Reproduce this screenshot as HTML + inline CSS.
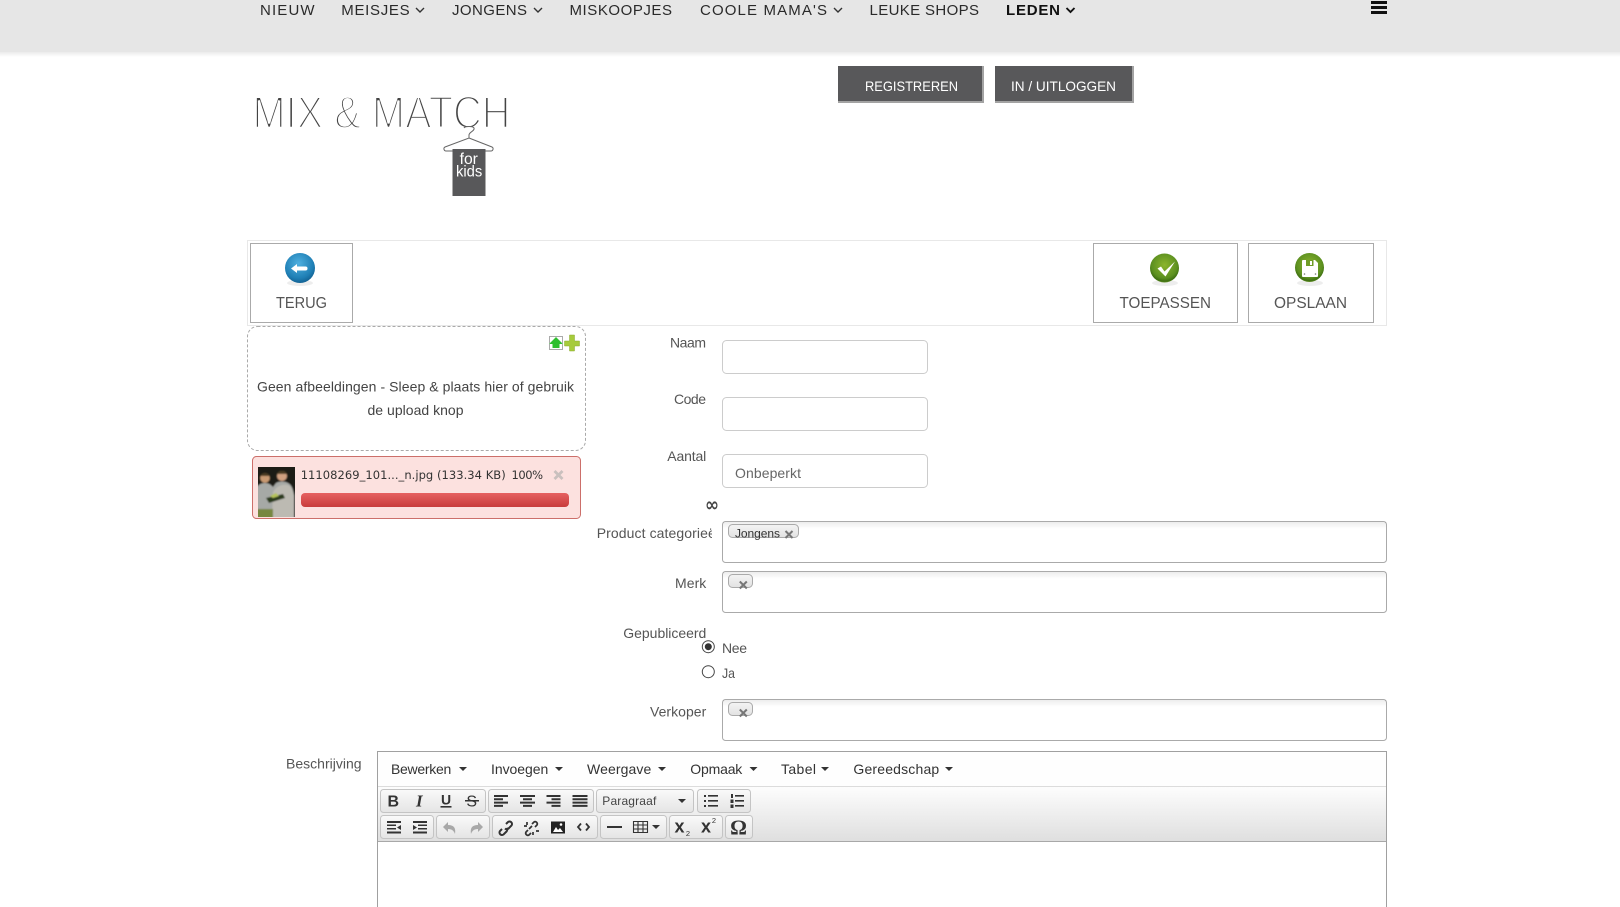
<!DOCTYPE html>
<html lang="nl"><head><meta charset="utf-8"><title>Mix &amp; Match for kids</title>
<style>
html,body{margin:0;padding:0;background:#fff;width:1620px;height:907px;overflow:hidden}
svg{display:block;font-family:"Liberation Sans",sans-serif}
.nav{font-size:15px;fill:#2a2a2a}
.chev{fill:none;stroke:#333;stroke-width:1.4}
.lbl{font-size:14px;fill:#555}
.big{font-size:16px;fill:#555}
.box{fill:#fff;stroke:#aaa;stroke-width:1}
.inp{fill:#fff;stroke:#ccc;stroke-width:1}
.sel{fill:#fff;stroke:#aaa;stroke-width:1}
.tag{fill:url(#tagg);stroke:#aaa;stroke-width:1}
.x{stroke:#777;stroke-width:2;fill:none}
.mn{font-size:14px;fill:#333}
.car{fill:#333}
.g{fill:url(#btn);stroke:#c4c4c4;stroke-width:1}
.i{fill:#333}
</style></head><body>
<svg width="1620" height="907" viewBox="0 0 1620 907" xmlns="http://www.w3.org/2000/svg">
<defs>
<linearGradient id="shd" x1="0" y1="0" x2="0" y2="1"><stop offset="0" stop-color="#000" stop-opacity=".08"/><stop offset="1" stop-color="#000" stop-opacity="0"/></linearGradient>
<linearGradient id="ins" x1="0" y1="0" x2="0" y2="1"><stop offset="0" stop-color="#000" stop-opacity=".07"/><stop offset="1" stop-color="#000" stop-opacity="0"/></linearGradient>
<linearGradient id="tagg" x1="0" y1="0" x2="0" y2="1"><stop offset="0" stop-color="#f4f4f4"/><stop offset="1" stop-color="#e2e2e2"/></linearGradient>
<linearGradient id="btn" x1="0" y1="0" x2="0" y2="1"><stop offset="0" stop-color="#fafafa"/><stop offset="1" stop-color="#e4e4e4"/></linearGradient>
<linearGradient id="tb" x1="0" y1="0" x2="0" y2="1"><stop offset="0" stop-color="#fdfdfd"/><stop offset="1" stop-color="#dfdfdf"/></linearGradient>
<linearGradient id="bar" x1="0" y1="0" x2="0" y2="1"><stop offset="0" stop-color="#e66060"/><stop offset="1" stop-color="#c83c3c"/></linearGradient>
<radialGradient id="blue" cx=".45" cy=".35" r=".7"><stop offset="0" stop-color="#4fb0e0"/><stop offset=".7" stop-color="#1f7fb5"/><stop offset="1" stop-color="#0f5a8a"/></radialGradient>
<radialGradient id="grn" cx=".5" cy=".4" r=".62"><stop offset="0" stop-color="#8cb52e"/><stop offset=".72" stop-color="#5c9020"/><stop offset=".9" stop-color="#3f7012"/><stop offset="1" stop-color="#7fa93a"/></radialGradient>
<clipPath id="pc"><rect x="590" y="520" width="122" height="30"/></clipPath>
<clipPath id="th"><rect x="258" y="467" width="37" height="50"/></clipPath>
<filter id="soft" x="0" y="0" width="100%" height="100%"><feGaussianBlur stdDeviation=".7"/></filter>
</defs>

<!-- header -->
<rect x="0" y="0" width="1620" height="52" fill="#e6e6e6"/>
<rect x="0" y="52" width="1620" height="5" fill="url(#shd)"/>
<text class="nav" x="260" y="15" textLength="54.6">NIEUW</text>
<text class="nav" x="341.3" y="15" textLength="68.3">MEISJES</text>
<path class="chev" d="M416 8l4 4 4-4"/>
<text class="nav" x="452" y="15" textLength="75">JONGENS</text>
<path class="chev" d="M534 8l4 4 4-4"/>
<text class="nav" x="569.5" y="15" textLength="102.5">MISKOOPJES</text>
<text class="nav" x="700" y="15" textLength="127">COOLE MAMA'S</text>
<path class="chev" d="M834 8l4 4 4-4"/>
<text class="nav" x="869.5" y="15" textLength="109.5">LEUKE SHOPS</text>
<text class="nav" x="1006" y="15" textLength="54" font-weight="700" style="fill:#111">LEDEN</text>
<path d="M1066.500 8l4 4 4-4" fill="none" stroke="#111" stroke-width="1.900"/>
<path d="M1371 1h16v3h-16zM1371 6h16v3h-16zM1371 11h16v3h-16z" fill="#111"/>

<!-- login buttons -->
<rect x="838" y="66" width="146" height="37" fill="#a3a3a3"/><path d="M838 66h144v35l-144 0z" fill="#58585a"/><path d="M838 103l2-2h142l2 2z" fill="#a3a3a3"/>
<text x="865" y="91" font-size="14" fill="#fff" textLength="93" lengthAdjust="spacingAndGlyphs">REGISTREREN</text>
<rect x="995" y="66" width="139" height="37" fill="#a3a3a3"/><path d="M995 66h137v35h-137z" fill="#58585a"/>
<text x="1011" y="91" font-size="14" fill="#fff" textLength="105" lengthAdjust="spacingAndGlyphs">IN / UITLOGGEN</text>

<!-- logo -->
<text x="252.500" y="128" font-size="45" fill="#444" stroke="#fff" stroke-width="2.400" textLength="258" lengthAdjust="spacingAndGlyphs">MIX &amp; MATCH</text>
<path d="M464 128c1-2 9-2 10 0 1 3-5 4-5 7v3M469 138l23 9c2 1 1 4-1 4h-45c-2 0-3-3-1-4z" fill="#fff" stroke="#666" stroke-width="1"/>
<rect x="452.500" y="149" width="33" height="47" fill="#58585a"/>
<text x="459.600" y="164" font-size="16" fill="#fff" textLength="18.300" lengthAdjust="spacingAndGlyphs">for</text>
<text x="456" y="176.500" font-size="16" fill="#fff" textLength="26.300" lengthAdjust="spacingAndGlyphs">kids</text>

<!-- action bar -->
<rect x="247.500" y="240.500" width="1139" height="85" fill="#fff" stroke="#e8e8e8"/>
<rect class="box" x="250.500" y="243.500" width="102" height="79"/>
<ellipse cx="300" cy="283" rx="13" ry="3" fill="#000" opacity=".07"/>
<circle cx="300" cy="268" r="15" fill="url(#blue)"/>
<path d="M291 268.500l6-4.500v2.500h8.500a2 2 0 0 1 0 4h-8.500v2.500z" fill="#fff"/>
<text class="big" x="276" y="308" textLength="51" lengthAdjust="spacingAndGlyphs">TERUG</text>

<rect class="box" x="1093.500" y="243.500" width="144" height="79"/>
<ellipse cx="1165" cy="283" rx="13" ry="3" fill="#000" opacity=".07"/>
<circle cx="1164.500" cy="268" r="14.500" fill="url(#grn)"/>
<path d="M1157.500 268.500l3.500-2 3.500 5 10.500-10-9.500 15z" fill="#fff"/>
<text class="big" x="1119.500" y="308" textLength="91.500" lengthAdjust="spacingAndGlyphs">TOEPASSEN</text>

<rect class="box" x="1248.500" y="243.500" width="125" height="79"/>
<ellipse cx="1310" cy="283" rx="13" ry="3" fill="#000" opacity=".07"/>
<circle cx="1309.500" cy="267.500" r="14.500" fill="url(#grn)"/>
<path d="M1303 260h12l3 3v13a1 1 0 0 1-1 1h-14a1 1 0 0 1-1-1v-15a1 1 0 0 1 1-1z" fill="#fff"/>
<rect x="1306" y="260" width="7.500" height="6" fill="#6f9c28"/><rect x="1310" y="261" width="2" height="4" fill="#fff"/>
<circle cx="1304.500" cy="274" r=".8" fill="#777"/><circle cx="1315.500" cy="274" r=".8" fill="#777"/>
<text class="big" x="1274" y="308" textLength="73" lengthAdjust="spacingAndGlyphs">OPSLAAN</text>

<!-- dropzone -->
<rect x="247.500" y="326.500" width="338" height="124" rx="10" fill="#fff" stroke="#aaa" stroke-dasharray="3 2"/>
<rect x="549.500" y="336.500" width="13" height="13" fill="#fff" stroke="#555" stroke-dasharray="1 1"/>
<path d="M556 337l7 7h-3.500v4h-7v-4h-3.500z" fill="#2fbf2f"/>
<path d="M569.500 335h5v6h5v5h-5v5h-5v-5h-5v-5h5z" fill="#a6cb3c" stroke="#8aa92e" stroke-width=".5"/>
<text x="257" y="391.500" font-size="14" fill="#444" textLength="317">Geen afbeeldingen - Sleep &amp; plaats hier of gebruik</text>
<text x="367.500" y="415" font-size="14" fill="#444" textLength="96">de upload knop</text>

<!-- upload item -->
<rect x="252.500" y="456.500" width="328" height="62" rx="4" fill="#fce1df" stroke="#cc6f6a"/>
<g clip-path="url(#th)"><g filter="url(#soft)">
<rect x="256" y="465" width="41" height="54" fill="#1c1a12"/>
<path d="M256 488c3-4 6-5 9-5 4 0 6 2 8 4l3-4c3-2 9-2 12 0 4 2 5 6 6 12v26h-38z" fill="#a6a9a6"/>
<path d="M273 492c3-5 8-8 14-7 5 1 6 6 7 12v22h-22z" fill="#bcbab2"/>
<rect x="256" y="509" width="17" height="10" fill="#77873f"/>
<circle cx="265" cy="478" r="4.800" fill="#c89a72"/>
<circle cx="282" cy="476" r="5" fill="#d0a080"/>
<path d="M260.500 476c1-4 8-4 9 0zM277 474c1-4 9-4 10 0z" fill="#4a3a22"/>
<path d="M266 498l17-4 2 4-16 5z" fill="#2c3a1e"/>
<path d="M270 496l6-3 3 3-6 2z" fill="#b5c25a"/>
</g></g>
<text x="300.700" y="479" font-size="11.500" fill="#333" style="font-family:'DejaVu Sans',sans-serif" textLength="205">11108269_101..._n.jpg (133.34 KB)</text>
<text x="511.500" y="479" font-size="11.500" fill="#333" style="font-family:'DejaVu Sans',sans-serif" textLength="31.500">100%</text>
<path d="M554.500 471l8 8M562.500 471l-8 8" stroke="#c9c0be" stroke-width="2.800" fill="none"/>
<rect x="301" y="493" width="268" height="14" rx="4" fill="url(#bar)"/>

<!-- form -->
<text class="lbl" x="670" y="347.500" textLength="36">Naam</text>
<rect class="inp" x="722.500" y="340.500" width="205" height="33" rx="4"/>
<text class="lbl" x="674" y="404" textLength="32">Code</text>
<rect class="inp" x="722.500" y="397.500" width="205" height="33" rx="4"/>
<text class="lbl" x="667.300" y="461" textLength="39">Aantal</text>
<rect class="inp" x="722.500" y="454.500" width="205" height="33" rx="4"/>
<text class="lbl" x="735" y="478" textLength="66" style="fill:#666">Onbeperkt</text>
<text x="705" y="511" font-size="19" font-weight="700" fill="#444" style="font-family:'DejaVu Sans',sans-serif" textLength="14" lengthAdjust="spacingAndGlyphs">∞</text>

<text class="lbl" x="596.700" y="538" textLength="127" clip-path="url(#pc)">Product categorieën</text>
<rect class="sel" x="722.500" y="521.500" width="664" height="41" rx="3"/>
<rect x="723" y="522" width="663" height="7" fill="url(#ins)"/>
<rect class="tag" x="728.500" y="524.500" width="70" height="13" rx="4"/>
<text x="735" y="537.500" font-size="12" fill="#333" textLength="45">Jongens</text>
<path class="x" d="M785.500 531l7 7M792.500 531l-7 7"/>

<text class="lbl" x="675" y="588" textLength="31.300">Merk</text>
<rect class="sel" x="722.500" y="571.500" width="664" height="41" rx="3"/>
<rect x="723" y="572" width="663" height="7" fill="url(#ins)"/>
<rect class="tag" x="728.500" y="574.500" width="24" height="13" rx="4"/>
<path class="x" d="M739.800 581.500l7 7M746.800 581.500l-7 7"/>

<text class="lbl" x="623.300" y="638" textLength="83">Gepubliceerd</text>
<circle cx="708.300" cy="646.700" r="6" fill="#fff" stroke="#444"/>
<circle cx="708.300" cy="646.700" r="3.500" fill="#333"/>
<text class="lbl" x="722" y="653" textLength="25">Nee</text>
<circle cx="708.300" cy="671.700" r="6" fill="#fff" stroke="#444"/>
<text class="lbl" x="722" y="678" textLength="13" lengthAdjust="spacingAndGlyphs">Ja</text>

<text class="lbl" x="650" y="716.500" textLength="56.300">Verkoper</text>
<rect class="sel" x="722.500" y="699.500" width="664" height="41" rx="3"/>
<rect x="723" y="700" width="663" height="7" fill="url(#ins)"/>
<rect class="tag" x="728.500" y="702.500" width="24" height="13" rx="4"/>
<path class="x" d="M739.800 709.500l7 7M746.800 709.500l-7 7"/>

<!-- editor -->
<text class="lbl" x="286" y="768.500" textLength="75.600">Beschrijving</text>
<rect x="377.500" y="751.500" width="1009" height="170" fill="#fff" stroke="#a0a0a0"/>
<rect x="378" y="752" width="1008" height="35" fill="#fefefe"/>
<rect x="378" y="787" width="1008" height="54" fill="url(#tb)"/>
<path d="M378 786.500h1008" stroke="#dcdcdc"/><path d="M378 841.500h1008" stroke="#a8a8a8"/>

<text class="mn" x="391" y="774" textLength="60.300">Bewerken</text><path class="car" d="M459 767h8l-4 4z"/>
<text class="mn" x="491" y="774" textLength="57.300">Invoegen</text><path class="car" d="M555 767h8l-4 4z"/>
<text class="mn" x="587" y="774" textLength="64.300">Weergave</text><path class="car" d="M658 767h8l-4 4z"/>
<text class="mn" x="690.300" y="774" textLength="52">Opmaak</text><path class="car" d="M749.500 767h8l-4 4z"/>
<text class="mn" x="781" y="774" textLength="35">Tabel</text><path class="car" d="M821 767h8l-4 4z"/>
<text class="mn" x="853.400" y="774" textLength="85.800">Gereedschap</text><path class="car" d="M945 767h8l-4 4z"/>

<!-- toolbar row 1 -->
<rect class="g" x="380.500" y="789.500" width="105" height="23" rx="3"/>
<rect class="g" x="488.500" y="789.500" width="105" height="23" rx="3"/>
<rect class="g" x="596.500" y="789.500" width="97" height="23" rx="3"/>
<rect class="g" x="697.500" y="789.500" width="53" height="23" rx="3"/>
<text x="393.300" y="806.500" font-size="16" font-weight="700" fill="#333" text-anchor="middle">B</text>
<text x="419.300" y="806.500" font-size="17" font-weight="700" font-style="italic" fill="#333" text-anchor="middle" style="font-family:'Liberation Serif',serif">I</text>
<text x="446" y="804.500" font-size="14" font-weight="700" fill="#333" text-anchor="middle">U</text><rect x="440.500" y="806" width="11" height="1.600" fill="#333"/>
<text x="471.700" y="806.500" font-size="16" fill="#333" text-anchor="middle">S</text><rect x="465" y="800" width="14" height="1.500" fill="#333"/>
<path class="i" d="M494 795h14v2h-14zM494 798.300h9v2h-9zM494 801.600h14v2h-14zM494 804.900h9v2h-9z"/>
<path class="i" d="M520 795h15v2h-15zM523 798.300h9v2h-9zM520 801.600h15v2h-15zM523 804.900h9v2h-9z"/>
<path class="i" d="M546.500 795h14v2h-14zM551.500 798.300h9v2h-9zM546.500 801.600h14v2h-14zM551.500 804.900h9v2h-9z"/>
<path class="i" d="M572.500 795h15v2h-15zM572.500 798.300h15v2h-15zM572.500 801.600h15v2h-15zM572.500 804.900h15v2h-15z"/>
<text x="602.300" y="805" font-size="12" fill="#444" textLength="54">Paragraaf</text>
<path class="car" d="M678 799h8l-4 4z"/>
<path class="i" d="M704 795h2v2h-2zM708 795h10v1.600h-10zM704 800h2v2h-2zM708 800h10v1.600h-10zM704 805h2v2h-2zM708 805h10v1.600h-10z"/>
<path class="i" d="M735 795h9v1.600h-9zM735 800h9v1.600h-9zM735 805h9v1.600h-9zM731 794h2v4h-2zM730.500 799.500h3v3.500h-3zM730.500 804.500h3v3.500h-3z"/>

<!-- toolbar row 2 -->
<rect class="g" x="380.500" y="815.500" width="53" height="23" rx="3"/>
<rect class="g" x="436.500" y="815.500" width="53" height="23" rx="3"/>
<rect class="g" x="492.500" y="815.500" width="105" height="23" rx="3"/>
<rect class="g" x="600.500" y="815.500" width="66" height="23" rx="3"/>
<rect class="g" x="669.500" y="815.500" width="53" height="23" rx="3"/>
<rect class="g" x="725.500" y="815.500" width="27" height="23" rx="3"/>
<path class="i" d="M387 821h14v2h-14zM387 824.500h9v1.500h-9zM387 828h9v1.500h-9zM387 831.500h14v2h-14zM401 825l-4 2.500 4 2.500z"/>
<path class="i" d="M413 821h14v2h-14zM418 824.500h9v1.500h-9zM418 828h9v1.500h-9zM413 831.500h14v2h-14zM413 825l4 2.500-4 2.500z"/>
<path d="M443 827l5-5v3c6 0 8 3 7 9-1-3-3-5-7-5v3z" fill="#a8a8a8"/>
<path d="M483 827l-5-5v3c-6 0-8 3-7 9 1-3 3-5 7-5v3z" fill="#a8a8a8"/>
<path d="M502 829l-2 2a2.500 2.500 0 0 0 3.500 3.500l3-3a2.500 2.500 0 0 0 0-3.500M506 824l2-2a2.500 2.500 0 0 1 3.500 3.500l-3 3a2.500 2.500 0 0 1-3.500 0" fill="none" stroke="#333" stroke-width="2"/>
<path d="M528 830l-2 2a2.200 2.200 0 0 0 3 3l2-2M532 824l2-2a2.200 2.200 0 0 1 3 3l-2 2M524 826h3M527 822v3M533 835v-3M536 831h3M529 829l3-3" fill="none" stroke="#333" stroke-width="1.700"/>
<rect x="551" y="821.500" width="14" height="12" fill="#222"/><path d="M553 832l3-5 2 3 2-2 3 4z" fill="#fff"/><circle cx="561" cy="824.500" r="1.300" fill="#fff"/>
<path d="M581 823.500l-3 3.500 3 3.500M586 823.500l3 3.500-3 3.500" fill="none" stroke="#333" stroke-width="1.800"/>
<rect x="607" y="826" width="15" height="2" fill="#333"/>
<path d="M633.500 821.500h14v11h-14zM633.500 825h14M633.500 829h14M638 822v10M643 822v10" fill="none" stroke="#333" stroke-width="1.100"/>
<path class="car" d="M652 825h8l-4 4z"/>
<text x="679.500" y="832.500" font-size="18" font-weight="700" fill="#333" text-anchor="middle">x</text><text x="688" y="836" font-size="7.500" fill="#333" text-anchor="middle">2</text>
<text x="706" y="832.500" font-size="18" font-weight="700" fill="#333" text-anchor="middle">x</text><text x="714" y="823" font-size="7.500" fill="#333" text-anchor="middle">2</text>
<text x="738.500" y="834.500" font-size="21" font-weight="700" fill="#333" text-anchor="middle" style="font-family:'Liberation Serif',serif">Ω</text>
</svg>
</body></html>
